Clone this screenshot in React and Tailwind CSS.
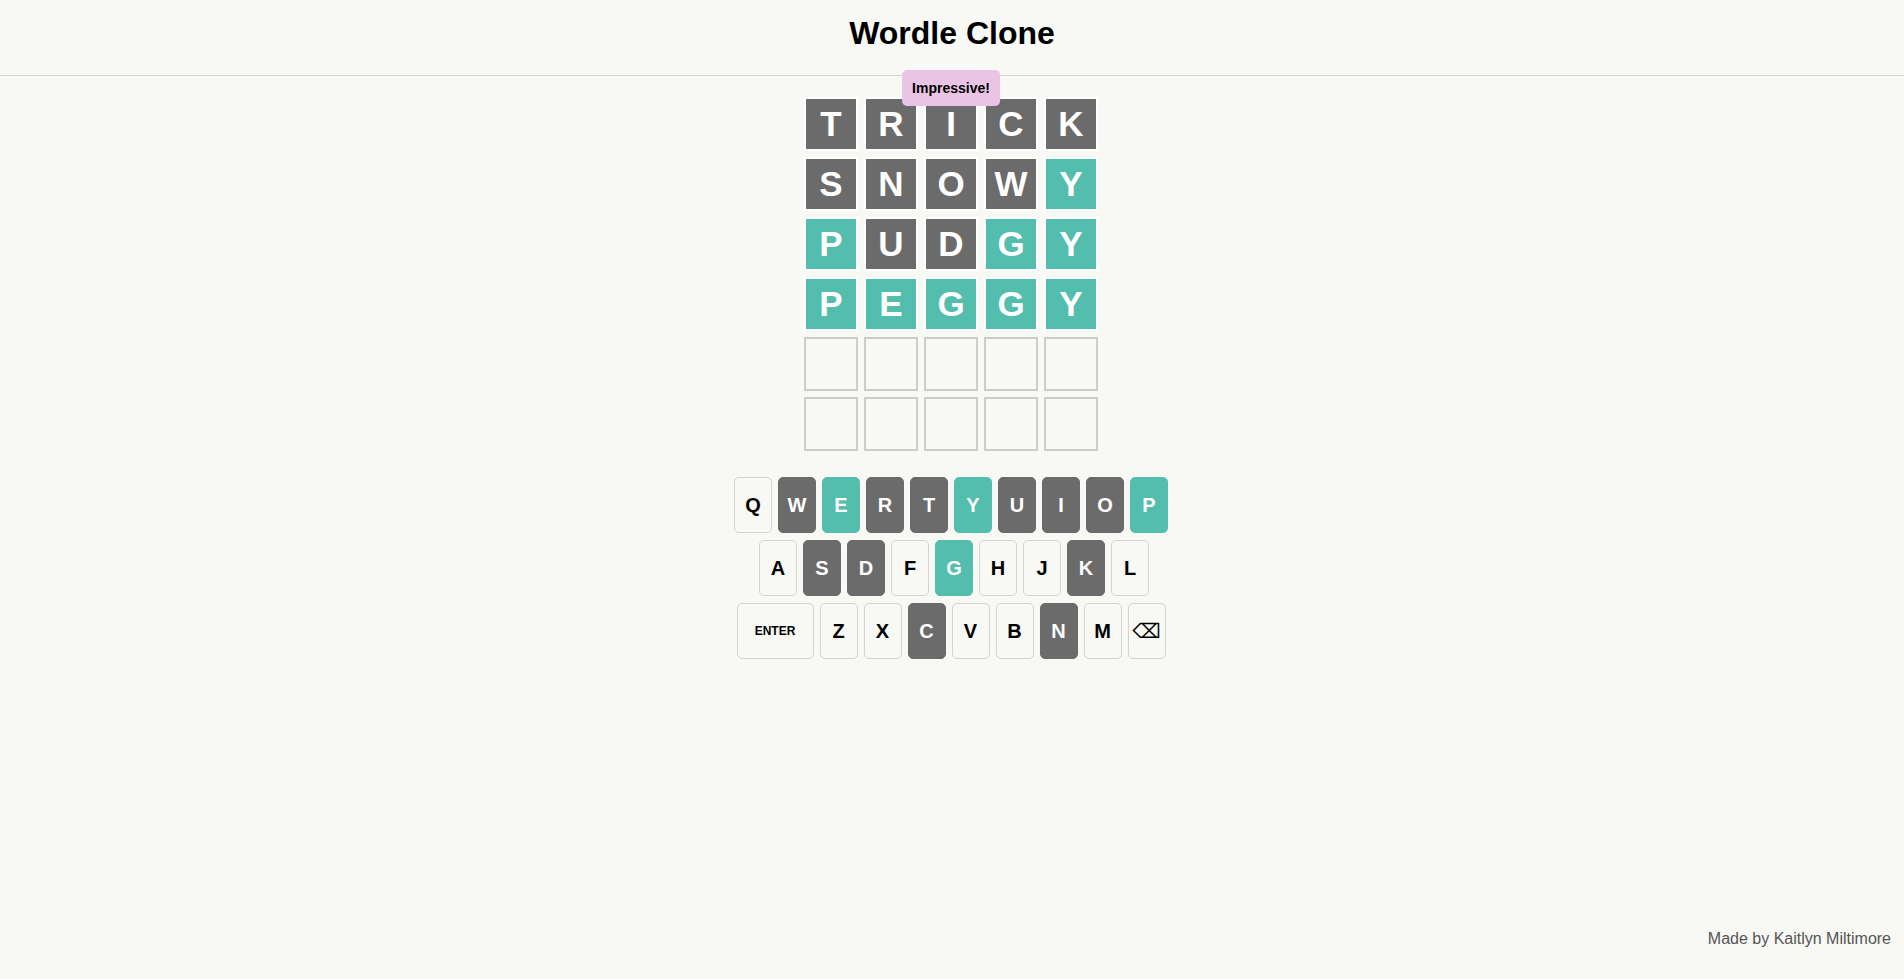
import React from "react";

const GRAY = "bg-[#6b6b6b] text-white border-[#6b6b6b]";
const TEAL = "bg-[#53bead] text-white border-[#53bead]";
const NONE = "bg-[#f8f8f4] text-black border-[#d3d3d3]";

const guesses = [
  ["TRICK", "xxxxx"],
  ["SNOWY", "xxxxg"],
  ["PUDGY", "gxxgg"],
  ["PEGGY", "ggggg"],
  ["", ""],
  ["", ""],
];

const keyState = {
  W: "x", R: "x", T: "x", U: "x", I: "x", O: "x", S: "x", D: "x", K: "x", C: "x", N: "x",
  E: "g", Y: "g", P: "g", G: "g",
};

const rows = ["QWERTYUIOP".split(""), "ASDFGHJKL".split(""), ["ENTER", ..."ZXCVBNM".split(""), "DEL"]];

const Tile = ({ letter, state }) => {
  if (!letter) {
    return <div className="w-[54px] h-[54px] border-2 border-[#cccccc]" />;
  }
  return (
    <div
      className={`w-[54px] h-[54px] border-2 border-white flex items-center justify-center text-[35px] font-bold text-white ${
        state === "g" ? "bg-[#53bead]" : "bg-[#6b6b6b]"
      }`}
    >
      {letter}
    </div>
  );
};

const Key = ({ k }) => {
  const s = keyState[k];
  const color = s === "g" ? TEAL : s === "x" ? GRAY : NONE;
  if (k === "ENTER") {
    return (
      <button className={`w-[77px] h-[56px] rounded-[5px] border text-[12px] font-bold flex items-center justify-center ${NONE}`}>
        ENTER
      </button>
    );
  }
  if (k === "DEL") {
    return (
      <button
        className={`w-[38px] h-[56px] rounded-[5px] border text-[20px] flex items-center justify-center ${NONE}`}
        style={{ fontFamily: "'DejaVu Sans', sans-serif" }}
      >
        ⌫
      </button>
    );
  }
  return (
    <button className={`w-[38px] h-[56px] rounded-[5px] border text-[20px] font-bold flex items-center justify-center ${color}`}>
      {k}
    </button>
  );
};

export default function App() {
  return (
    <div className="h-screen flex flex-col bg-[#f8f8f4] font-['Liberation_Sans',Arial,sans-serif] text-black overflow-hidden">
      <header className="h-[76px] border-b border-[#d3d3d3] pt-[15px] text-center">
        <h1 className="text-[32px] font-bold leading-[37px]">Wordle Clone</h1>
      </header>

      <main className="flex flex-col items-center pt-[21px] pr-[2px]">
        <div className="relative grid grid-cols-5 gap-[6px]">
          <div className="absolute left-1/2 -translate-x-1/2 -top-[27px] z-10 bg-[#eac4e4] rounded-[5px] px-[10px] h-[36px] flex items-center text-[14px] font-bold whitespace-nowrap">
            Impressive!
          </div>
          {guesses.map(([word, states], r) =>
            [0, 1, 2, 3, 4].map((c) => (
              <Tile key={`${r}-${c}`} letter={word[c]} state={states[c]} />
            ))
          )}
        </div>

        <div className="mt-[26px] flex flex-col items-center gap-[7px]">
          {rows.map((row, i) => (
            <div key={i} className={`flex gap-[6px] ${i === 1 ? "ml-[6px]" : ""}`}>
              {row.map((k) => (
                <Key key={k} k={k} />
              ))}
            </div>
          ))}
        </div>
      </main>

      <footer className="mt-auto text-right pr-[13px] pb-[28px] text-[16px] text-[#555555]">
        Made by Kaitlyn Miltimore
      </footer>
    </div>
  );
}
